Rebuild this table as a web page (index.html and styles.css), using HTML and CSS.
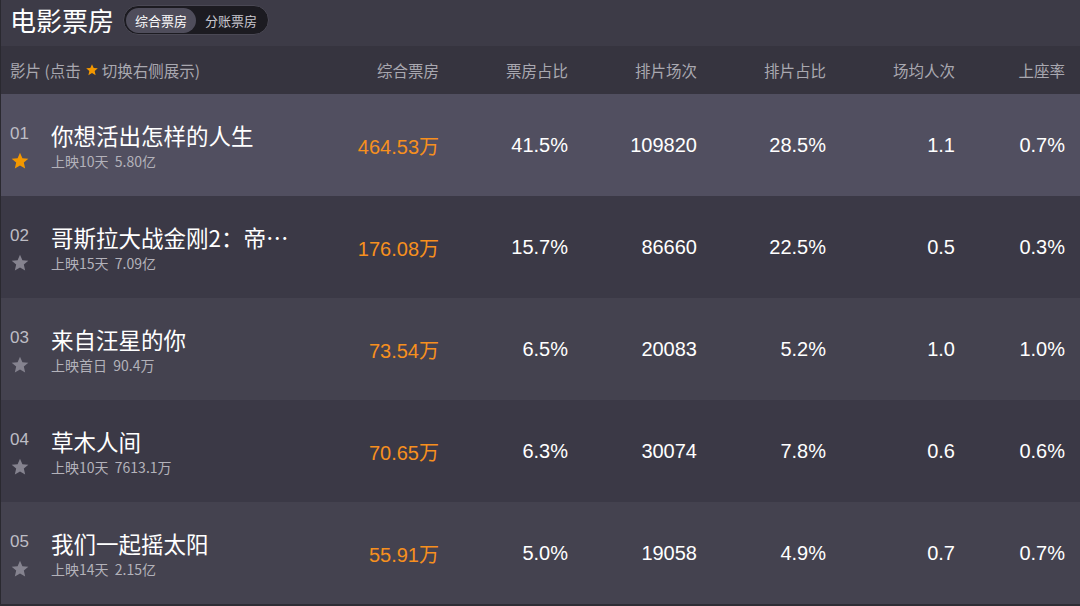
FILE: index.html
```html
<!DOCTYPE html>
<html lang="zh">
<head>
<meta charset="utf-8">
<title>电影票房</title>
<link rel="stylesheet" href="styles.css">
</head>
<body>
<div class="page">
  <header class="top">
    <h1 class="title">电影票房</h1>
    <div class="toggle">
      <span class="seg active">综合票房</span>
      <span class="seg">分账票房</span>
    </div>
  </header>
  <div class="row head">
    <div class="film-h">影片 (点击 <svg class="star-s" viewBox="0 0 24 24"><path d="M12 2l2.9 6.6 7.1.6-5.4 4.7 1.6 7L12 17.3 5.8 20.9l1.6-7L2 9.2l7.1-.6z"/></svg> 切换右侧展示)</div>
    <div class="c">综合票房</div>
    <div class="c">票房占比</div>
    <div class="c">排片场次</div>
    <div class="c">排片占比</div>
    <div class="c">场均人次</div>
    <div class="c">上座率</div>
  </div>

  <div class="row item sel">
    <div class="film">
      <div class="main"><span class="no">01</span><span class="name">你想活出怎样的人生</span></div>
      <div class="sub"><svg class="star on" viewBox="0 0 24 24"><path d="M12 2l2.9 6.6 7.1.6-5.4 4.7 1.6 7L12 17.3 5.8 20.9l1.6-7L2 9.2l7.1-.6z"/></svg><span class="info">上映10天&nbsp;&nbsp;5.80亿</span></div>
    </div>
    <div class="c box">464.53万</div><div class="c">41.5%</div><div class="c">109820</div><div class="c">28.5%</div><div class="c">1.1</div><div class="c">0.7%</div>
  </div>

  <div class="row item dark">
    <div class="film">
      <div class="main"><span class="no">02</span><span class="name">哥斯拉大战金刚2：帝国崛起</span></div>
      <div class="sub"><svg class="star" viewBox="0 0 24 24"><path d="M12 2l2.9 6.6 7.1.6-5.4 4.7 1.6 7L12 17.3 5.8 20.9l1.6-7L2 9.2l7.1-.6z"/></svg><span class="info">上映15天&nbsp;&nbsp;7.09亿</span></div>
    </div>
    <div class="c box">176.08万</div><div class="c">15.7%</div><div class="c">86660</div><div class="c">22.5%</div><div class="c">0.5</div><div class="c">0.3%</div>
  </div>

  <div class="row item light">
    <div class="film">
      <div class="main"><span class="no">03</span><span class="name">来自汪星的你</span></div>
      <div class="sub"><svg class="star" viewBox="0 0 24 24"><path d="M12 2l2.9 6.6 7.1.6-5.4 4.7 1.6 7L12 17.3 5.8 20.9l1.6-7L2 9.2l7.1-.6z"/></svg><span class="info">上映首日&nbsp;&nbsp;90.4万</span></div>
    </div>
    <div class="c box">73.54万</div><div class="c">6.5%</div><div class="c">20083</div><div class="c">5.2%</div><div class="c">1.0</div><div class="c">1.0%</div>
  </div>

  <div class="row item dark">
    <div class="film">
      <div class="main"><span class="no">04</span><span class="name">草木人间</span></div>
      <div class="sub"><svg class="star" viewBox="0 0 24 24"><path d="M12 2l2.9 6.6 7.1.6-5.4 4.7 1.6 7L12 17.3 5.8 20.9l1.6-7L2 9.2l7.1-.6z"/></svg><span class="info">上映10天&nbsp;&nbsp;7613.1万</span></div>
    </div>
    <div class="c box">70.65万</div><div class="c">6.3%</div><div class="c">30074</div><div class="c">7.8%</div><div class="c">0.6</div><div class="c">0.6%</div>
  </div>

  <div class="row item light">
    <div class="film">
      <div class="main"><span class="no">05</span><span class="name">我们一起摇太阳</span></div>
      <div class="sub"><svg class="star" viewBox="0 0 24 24"><path d="M12 2l2.9 6.6 7.1.6-5.4 4.7 1.6 7L12 17.3 5.8 20.9l1.6-7L2 9.2l7.1-.6z"/></svg><span class="info">上映14天&nbsp;&nbsp;2.15亿</span></div>
    </div>
    <div class="c box">55.91万</div><div class="c">5.0%</div><div class="c">19058</div><div class="c">4.9%</div><div class="c">0.7</div><div class="c">0.7%</div>
  </div>
</div>
</body>
</html>
```

FILE: styles.css
```css
* { box-sizing: border-box; }
html, body { margin: 0; padding: 0; }
body {
  width: 1080px;
  height: 606px;
  overflow: hidden;
  background: #2e2d35;
  font-family: "Liberation Sans", "Noto Sans CJK SC", sans-serif;
}
.page {
  width: 1080px;
  border-left: 1px solid #2a2930;
}
.top {
  height: 46px;
  background: #3d3b47;
  display: flex;
  align-items: center;
  padding: 0 0 6px 9px;
  gap: 9px;
}
.title {
  margin: 0;
  font-family: "Noto Sans CJK SC", sans-serif;
  font-size: 26px;
  font-weight: 400;
  color: #ffffff;
  line-height: 34px;
}
.toggle {
  display: flex;
  align-items: center;
  height: 30px;
  padding: 0 2px;
  background: #1c1b21;
  border: 1px solid #4a4854;
  border-radius: 15px;
}
.seg {
  font-family: "Noto Sans CJK SC", sans-serif;
  font-size: 13px;
  color: #c9c8cf;
  height: 25px;
  line-height: 25px;
  padding: 0 9px;
  border-radius: 13px;
}
.seg.active {
  background: #4f4d5b;
  color: #ffffff;
}
.row {
  display: grid;
  grid-template-columns: 1fr repeat(5, 129px) 110px;
  padding-right: 15px;
  align-items: center;
}
.head {
  height: 48px;
  background: #36343f;
  color: #a9a8b0;
  font-size: 15.5px;
  font-family: "Noto Sans CJK SC", sans-serif;
}
.film-h {
  padding-left: 9px;
  display: flex;
  align-items: center;
}
.star-s {
  width: 14px;
  height: 14px;
  fill: #f39800;
  margin: 0 3px 0 4px;
}
.c {
  text-align: right;
  white-space: nowrap;
}
.item {
  height: 102px;
  font-size: 20px;
  color: #ffffff;
}
.item.sel { background: #514f60; }
.item.dark { background: #3b3946; }
.item.light { background: #44424f; }
.box { color: #f7901e; }
.film {
  padding-left: 9px;
  padding-right: 18px;
  min-width: 0;
}
.main {
  display: flex;
  align-items: center;
  height: 32px;
  min-width: 0;
}
.no {
  width: 41px;
  flex: none;
  font-size: 17px;
  color: #bebdc5;
  margin-top: -3px;
}
.name {
  font-family: "Noto Sans CJK SC", sans-serif;
  font-size: 22.5px;
  color: #ffffff;
  white-space: nowrap;
  overflow: hidden;
  text-overflow: ellipsis;
  min-width: 0;
  line-height: 33px;
}
.sub {
  display: flex;
  align-items: center;
  height: 20px;
  margin-top: 0;
}
.star {
  width: 20px;
  height: 20px;
  fill: #85838f;
  margin-right: 21px;
  flex: none;
}
.star.on { fill: #f39800; }
.info {
  font-family: "Noto Sans CJK SC", sans-serif;
  font-size: 14px;
  color: #b3b2ba;
  line-height: 20px;
}
```
